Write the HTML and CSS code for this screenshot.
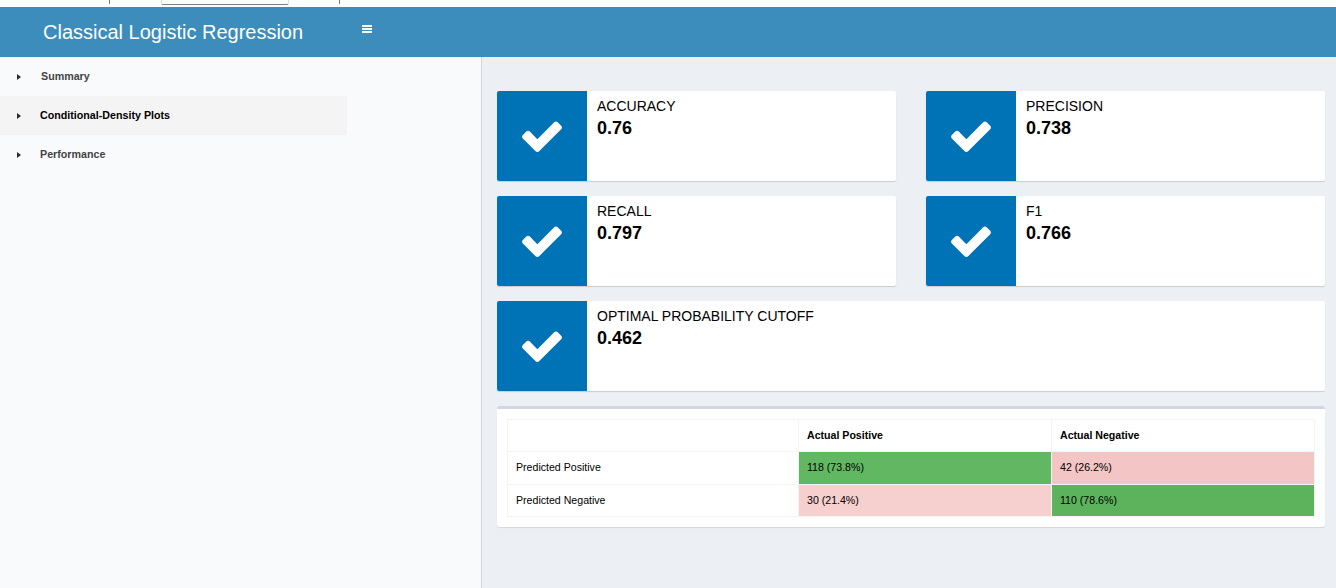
FILE: index.html
```html
<!DOCTYPE html>
<html lang="en">
<head>
    <meta charset="UTF-8">
    <meta name="viewport" content="width=device-width, initial-scale=1.0">
    <title>Classical Logistic Regression</title>
    <link rel="stylesheet" href="styles.css">
</head>
<body>
    <div class="top-strip">
        <div class="strip-tick"></div>
        <div class="strip-tab"></div>
        <div class="strip-tick"></div>
    </div>
    <header class="main-header">
        <div class="logo">Classical Logistic Regression</div>
        <a class="sidebar-toggle" href="#" aria-label="Toggle navigation">
            <span></span><span></span><span></span>
        </a>
    </header>
    <div class="wrapper">
        <aside class="sidebar">
            <ul class="sidebar-menu">
                <li class="menu-item"><span class="caret"></span><span class="menu-label label-summary">Summary</span></li>
                <li class="menu-item active"><span class="caret"></span><span class="menu-label">Conditional-Density Plots</span></li>
                <li class="menu-item"><span class="caret"></span><span class="menu-label">Performance</span></li>
            </ul>
        </aside>
        <main class="content">
            <div class="info-grid">
                <div class="info-box">
                    <div class="info-icon"><svg viewBox="0 0 1792 1792"><path d="M1671 566q0 40-28 68l-724 724-136 136q-28 28-68 28t-68-28l-136-136-362-362q-28-28-28-68t28-68l136-136q28-28 68-28t68 28l294 295 656-657q28-28 68-28t68 28l136 136q28 28 28 68z"/></svg></div>
                    <div class="info-text"><span class="info-title">ACCURACY</span><span class="info-number">0.76</span></div>
                </div>
                <div class="info-box">
                    <div class="info-icon"><svg viewBox="0 0 1792 1792"><path d="M1671 566q0 40-28 68l-724 724-136 136q-28 28-68 28t-68-28l-136-136-362-362q-28-28-28-68t28-68l136-136q28-28 68-28t68 28l294 295 656-657q28-28 68-28t68 28l136 136q28 28 28 68z"/></svg></div>
                    <div class="info-text"><span class="info-title">PRECISION</span><span class="info-number">0.738</span></div>
                </div>
                <div class="info-box">
                    <div class="info-icon"><svg viewBox="0 0 1792 1792"><path d="M1671 566q0 40-28 68l-724 724-136 136q-28 28-68 28t-68-28l-136-136-362-362q-28-28-28-68t28-68l136-136q28-28 68-28t68 28l294 295 656-657q28-28 68-28t68 28l136 136q28 28 28 68z"/></svg></div>
                    <div class="info-text"><span class="info-title">RECALL</span><span class="info-number">0.797</span></div>
                </div>
                <div class="info-box">
                    <div class="info-icon"><svg viewBox="0 0 1792 1792"><path d="M1671 566q0 40-28 68l-724 724-136 136q-28 28-68 28t-68-28l-136-136-362-362q-28-28-28-68t28-68l136-136q28-28 68-28t68 28l294 295 656-657q28-28 68-28t68 28l136 136q28 28 28 68z"/></svg></div>
                    <div class="info-text"><span class="info-title">F1</span><span class="info-number">0.766</span></div>
                </div>
                <div class="info-box wide">
                    <div class="info-icon"><svg viewBox="0 0 1792 1792"><path d="M1671 566q0 40-28 68l-724 724-136 136q-28 28-68 28t-68-28l-136-136-362-362q-28-28-28-68t28-68l136-136q28-28 68-28t68 28l294 295 656-657q28-28 68-28t68 28l136 136q28 28 28 68z"/></svg></div>
                    <div class="info-text"><span class="info-title">OPTIMAL PROBABILITY CUTOFF</span><span class="info-number">0.462</span></div>
                </div>
            </div>
            <div class="box">
                <table class="matrix">
                    <thead>
                        <tr class="row-head"><th class="col-row"></th><th class="col-pos">Actual Positive</th><th>Actual Negative</th></tr>
                    </thead>
                    <tbody>
                        <tr class="row-tall"><td>Predicted Positive</td><td class="good-a">118 (73.8%)</td><td class="bad-a">42 (26.2%)</td></tr>
                        <tr class="row-head"><td>Predicted Negative</td><td class="bad-b">30 (21.4%)</td><td class="good-b">110 (78.6%)</td></tr>
                    </tbody>
                </table>
            </div>
        </main>
    </div>
</body>
</html>
```

FILE: styles.css
```css
* {
    box-sizing: border-box;
}
html, body {
    height: 100%;
}
body {
    margin: 0;
    font-family: "Liberation Sans", Arial, sans-serif;
    font-size: 14px;
    color: #000;
    background-color: #ecf0f5;
    overflow: hidden;
    display: flex;
    flex-direction: column;
}
.top-strip {
    height: 7px;
    flex: none;
    background: #fff;
    padding-left: 109px;
    display: flex;
    align-items: flex-start;
}
.strip-tick {
    width: 1px;
    height: 4px;
    background: #777;
}
.strip-tab {
    width: 128px;
    height: 5px;
    margin: 0 50px 0 51px;
    border: 1px solid #ddd;
    border-top: none;
    border-bottom: 1px solid #808080;
    border-radius: 0 0 2px 2px;
}
.main-header {
    height: 50px;
    flex: none;
    background-color: #3c8dbc;
    display: flex;
    align-items: center;
    color: #fff;
}
.logo {
    width: 362px;
    padding-left: 43px;
    font-size: 20px;
}
.sidebar-toggle {
    display: flex;
    flex-direction: column;
    gap: 1px;
    width: 10px;
    margin-bottom: 6px;
}
.sidebar-toggle span {
    height: 2px;
    background: #fff;
}
.wrapper {
    flex: 1;
    display: flex;
    min-height: 0;
}
.sidebar {
    width: 482px;
    background-color: #f9fafc;
    border-right: 1px solid #d2d6de;
}
.sidebar-menu {
    list-style: none;
    margin: 0;
    padding: 0;
    width: 347px;
}
.menu-item {
    height: 39px;
    display: flex;
    align-items: center;
    padding-left: 17px;
    font-size: 10.7px;
    font-weight: bold;
    color: #444;
}
.menu-item.active {
    background-color: #f4f4f5;
    color: #000;
}
.menu-label {
    margin-bottom: 2px;
}
.caret {
    width: 0;
    height: 0;
    border-top: 3.5px solid transparent;
    border-bottom: 3.5px solid transparent;
    border-left: 4px solid #222d32;
    margin-right: 19px;
}
.label-summary {
    margin-left: 1px;
}
.content {
    flex: 1;
    padding: 34px 11px 0 15px;
}
.info-grid {
    display: grid;
    grid-template-columns: 1fr 1fr;
    gap: 15px 30px;
}
.info-box {
    height: 90px;
    display: flex;
    background: #fff;
    border-radius: 2px;
    box-shadow: 0 1px 1px rgba(0, 0, 0, 0.15);
}
.info-box.wide {
    grid-column: 1 / 3;
}
.info-icon {
    width: 90px;
    background-color: #0073b7;
    border-radius: 2px 0 0 2px;
    display: flex;
    align-items: center;
    justify-content: center;
}
.info-icon svg {
    width: 46px;
    height: 46px;
    margin-bottom: 1px;
    fill: #fff;
}
.info-text {
    padding: 5px 10px;
    display: flex;
    flex-direction: column;
}
.info-title {
    font-size: 14px;
    line-height: 20px;
}
.info-number {
    font-size: 18px;
    font-weight: bold;
    line-height: 24px;
}
.box {
    margin-top: 15px;
    height: 121px;
    background: #fff;
    border-top: 3px solid #d2d6de;
    border-radius: 3px;
    box-shadow: 0 1px 1px rgba(0, 0, 0, 0.1);
    padding: 10px;
}
.matrix {
    width: 100%;
    border-collapse: collapse;
    table-layout: fixed;
    font-size: 10.6px;
}
.matrix th, .matrix td {
    border: 1px solid #f4f4f4;
    text-align: left;
    padding: 0 8px 2px;
}
.row-head {
    height: 32px;
}
.row-tall {
    height: 33px;
}
.matrix th {
    font-weight: bold;
}
.col-row {
    width: 291px;
}
.col-pos {
    width: 253px;
}
.good-a {
    background-color: #62b862;
}
.good-b {
    background-color: #5cb35c;
}
.bad-a {
    background-color: #f4c5c5;
}
.bad-b {
    background-color: #f6cfcf;
}
```
